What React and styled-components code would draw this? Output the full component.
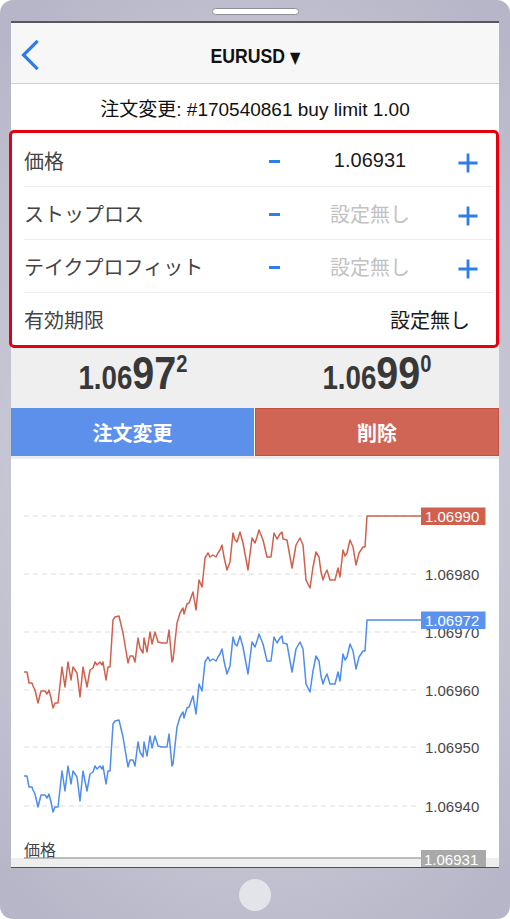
import React from "react";
import styled, { createGlobalStyle } from "styled-components";

const GlobalStyle = createGlobalStyle`
  html, body {
    margin: 0;
    padding: 0;
    background: #fff;
  }
  body {
    font-family: "Liberation Sans", "Noto Sans CJK JP", sans-serif;
  }
`;

const BLUE = "#2d7ee6";

const rows = [
  { label: "価格", value: "1.06931", set: true },
  { label: "ストップロス", value: "設定無し", set: false },
  { label: "テイクプロフィット", value: "設定無し", set: false },
];

const grid = [
  { y: 516, label: null },
  { y: 574, label: "1.06980" },
  { y: 632, label: "1.06970" },
  { y: 690, label: "1.06960" },
  { y: 747, label: "1.06950" },
  { y: 806, label: "1.06940" },
];

// ask line in page coordinates, the bid line is the same shape 104px lower
const askPoints = `24,672 27,672 29,683 32,683 33,686 35,690 38,703 41,691 45,691 47,694 49,690 51,698 53,708 55,703 58,703
62,667 65,687 68,662 71,680 73,667 77,673 80,697 83,667 87,687 90,670 93,668 95,662 97,665 100,662 102,665 103,662 106,680
108,667 110,667 113,620 115,617 119,616 123,633 125,645 128,663 130,656 133,656 135,662 138,638 140,648 143,653 144,638
147,652 150,632 152,644 153,640 155,632 158,642 162,643 167,643 169,630 172,662 173,660 177,623 180,613 183,608 184,614
187,604 189,603 193,592 196,610 199,580 202,587 205,558 208,553 210,557 213,555 216,557 218,553 220,550 222,545 224,557
227,570 230,562 233,533 235,540 237,542 240,532 243,543 248,570 252,538 255,543 257,537 259,530 263,540 267,557 271,557
274,533 277,539 280,534 282,532 283,539 287,540 292,568 296,545 300,538 303,545 306,580 310,588 313,567 316,552 319,557
321,572 323,580 325,574 327,570 330,580 335,580 338,568 340,577 343,550 345,556 347,553 350,540 353,547 356,565 359,553
363,547 365,547 367,516 421,516`;

const App = () => {
  return (
    <>
      <GlobalStyle />
      <Phone>
        <TopBezel>
          <Speaker />
        </TopBezel>
        <Screen>
          <NavBar>
            <BackButton>
              <svg width="18" height="30" viewBox="0 0 18 30">
                <polyline
                  points="15.5,2 2.5,15 15.5,28"
                  fill="none"
                  stroke={BLUE}
                  strokeWidth="3.2"
                  strokeLinecap="square"
                />
              </svg>
            </BackButton>
            <Title>
              EURUSD <Caret>▼</Caret>
            </Title>
            <span />
          </NavBar>
          <Subtitle>注文変更: #170540861 buy limit 1.00</Subtitle>
          <FormBox>
            {rows.map((r) => (
              <Row key={r.label}>
                <Label>{r.label}</Label>
                <Minus />
                <Value set={r.set}>{r.value}</Value>
                <Plus>
                  <svg width="20" height="20" viewBox="0 0 20 20">
                    <path d="M10 0.5v19M0.5 10h19" stroke={BLUE} strokeWidth="2.8" />
                  </svg>
                </Plus>
              </Row>
            ))}
            <ExpiryRow>
              <Label>有効期限</Label>
              <Value set>設定無し</Value>
            </ExpiryRow>
          </FormBox>
          <Prices>
            <Price>
              <Small>1.06</Small>
              <Big>97</Big>
              <Sup>2</Sup>
            </Price>
            <Price>
              <Small>1.06</Small>
              <Big>99</Big>
              <Sup>0</Sup>
            </Price>
          </Prices>
          <Buttons>
            <ActionButton color="#5c90ea">注文変更</ActionButton>
            <ActionButton color="#d06555" edge="#c4513f">
              削除
            </ActionButton>
          </Buttons>
          <Divider />
          <Chart>
            <svg width="488" height="408" viewBox="0 0 488 408">
              <g transform="translate(-11,-459)">
                {grid.map((g) => (
                  <line
                    key={g.y}
                    x1="24"
                    x2="418"
                    y1={g.y}
                    y2={g.y}
                    stroke="#dcdcdc"
                    strokeWidth="1"
                    strokeDasharray="5 4"
                  />
                ))}
                {grid
                  .filter((g) => g.label)
                  .map((g) => (
                    <text key={g.label} x="425" y={g.y + 6} fontSize="15" fill="#474747" fontFamily="Liberation Sans">
                      {g.label}
                    </text>
                  ))}
                <polyline points={askPoints} fill="none" stroke="#d0604e" strokeWidth="1.5" strokeLinejoin="round" />
                <polyline
                  points={askPoints}
                  transform="translate(0,104)"
                  fill="none"
                  stroke="#4e8cf0"
                  strokeWidth="1.5"
                  strokeLinejoin="round"
                />
                <rect x="421" y="507.5" width="64.5" height="17.5" fill="#d0604e" />
                <text x="425" y="522" fontSize="15" fill="#fff" fontFamily="Liberation Sans">
                  1.06990
                </text>
                <rect x="421" y="611.5" width="64.5" height="17.5" fill="#5a92ee" />
                <text x="425" y="626" fontSize="15" fill="#fff" fontFamily="Liberation Sans">
                  1.06972
                </text>
                <rect x="11" y="858" width="488" height="10" fill="#eeeeee" />
                <line x1="24" x2="421" y1="858" y2="858" stroke="#a8a8a8" strokeWidth="1.6" />
                <text x="24" y="856" fontSize="16" fill="#444" fontFamily="Noto Sans CJK JP">
                  価格
                </text>
                <rect x="421" y="850" width="65" height="18" fill="#a9a9a9" />
                <text x="424" y="864.5" fontSize="15" fill="#fff" fontFamily="Liberation Sans">
                  1.06931
                </text>
              </g>
            </svg>
          </Chart>
        </Screen>
        <BottomBezel>
          <HomeButton />
        </BottomBezel>
      </Phone>
    </>
  );
};

export default App;

const Phone = styled.div`
  width: 510px;
  height: 919px;
  box-sizing: border-box;
  padding: 0 11px;
  border-radius: 13px;
  overflow: hidden;
  display: flex;
  flex-direction: column;
  background: radial-gradient(ellipse 75% 60% at 50% 50%, #d0d0dd 0%, #c5c5d3 65%, #b6b6c8 100%);
`;
const TopBezel = styled.div`
  height: 21px;
  display: flex;
  justify-content: center;
  align-items: flex-start;
`;
const Speaker = styled.div`
  margin-top: 8px;
  width: 87px;
  height: 7px;
  box-sizing: border-box;
  border-radius: 4px;
  background: #fff;
  border: 1px solid #8f8f9a;
`;
const Screen = styled.div`
  height: 847px;
  box-sizing: border-box;
  border-top: 2px solid #585858;
  border-bottom: 1.5px solid #505050;
  background: #fff;
  display: flex;
  flex-direction: column;
`;
const NavBar = styled.div`
  height: 60px;
  flex: none;
  background: #f7f7f7;
  border-bottom: 1px solid #cfcfcf;
  display: grid;
  grid-template-columns: 70px 1fr 70px;
  align-items: center;
`;
const BackButton = styled.div`
  padding: 4px 0 0 10px;
  display: flex;
`;
const Title = styled.div`
  justify-self: center;
  padding-top: 5px;
  font-family: "Liberation Sans", sans-serif;
  font-weight: bold;
  font-size: 21px;
  color: #111;
  transform: scaleX(0.84);
`;
const Caret = styled.span`
  font-size: 16px;
  font-family: "DejaVu Sans", sans-serif;
`;
const Subtitle = styled.div`
  height: 46px;
  flex: none;
  display: flex;
  align-items: center;
  justify-content: center;
  font-size: 19px;
  color: #111;
`;
const FormBox = styled.div`
  flex: none;
  height: 218px;
  box-sizing: border-box;
  margin-left: -2px;
  padding-top: 1px;
  border: 3px solid #e6000f;
  border-radius: 5px;
  display: flex;
  flex-direction: column;
`;
const Row = styled.div`
  height: 52px;
  margin: 0 3px 0 12px;
  border-bottom: 1px solid #ececec;
  display: grid;
  grid-template-columns: 1fr 40px 152px 47px;
  align-items: center;
`;
const ExpiryRow = styled(Row)`
  border-bottom: none;
  grid-template-columns: 1fr auto;
  padding-right: 23px;
`;
const Label = styled.div`
  font-size: 20px;
  color: #444;
`;
const Minus = styled.span`
  justify-self: center;
  width: 11px;
  height: 3px;
  margin-top: 3px;
  background: ${BLUE};
`;
const Value = styled.div`
  text-align: center;
  font-size: 20px;
  color: ${(p) => (p.set ? "#1a1a1a" : "#c2c2c2")};
`;
const Plus = styled.div`
  display: flex;
  justify-content: center;
  padding: 6px 4px 0 0;
`;
const Prices = styled.div`
  flex: none;
  height: 60px;
  background: #efefef;
  display: grid;
  grid-template-columns: 1fr 1fr;
  align-items: center;
  justify-items: center;
`;
const Price = styled.div`
  line-height: 46px;
  font-family: "Liberation Sans", sans-serif;
  font-weight: bold;
  color: #383838;
  white-space: nowrap;
  transform: scaleX(0.84);
`;
const Small = styled.span`
  font-size: 33px;
`;
const Big = styled.span`
  font-size: 47px;
`;
const Sup = styled.span`
  font-size: 24px;
  line-height: 1;
  vertical-align: 17px;
`;
const Buttons = styled.div`
  flex: none;
  height: 48px;
  display: grid;
  grid-template-columns: 243px 1fr;
  gap: 1px;
`;
const ActionButton = styled.button`
  margin: 0;
  border: 1px solid ${(p) => p.edge || p.color};
  background: ${(p) => p.color};
  color: #fff;
  font-family: "Noto Sans CJK JP", sans-serif;
  font-weight: bold;
  font-size: 20px;
  padding: 0;
`;
const Divider = styled.div`
  flex: none;
  height: 3px;
  background: #ededed;
`;
const Chart = styled.div`
  flex: 1;
  min-height: 0;
  overflow: hidden;
  display: flex;
`;
const BottomBezel = styled.div`
  flex: 1;
  display: flex;
  align-items: center;
  justify-content: center;
`;
const HomeButton = styled.div`
  width: 32px;
  height: 32px;
  margin-top: 2px;
  border-radius: 50%;
  background: #e3e3ea;
`;
